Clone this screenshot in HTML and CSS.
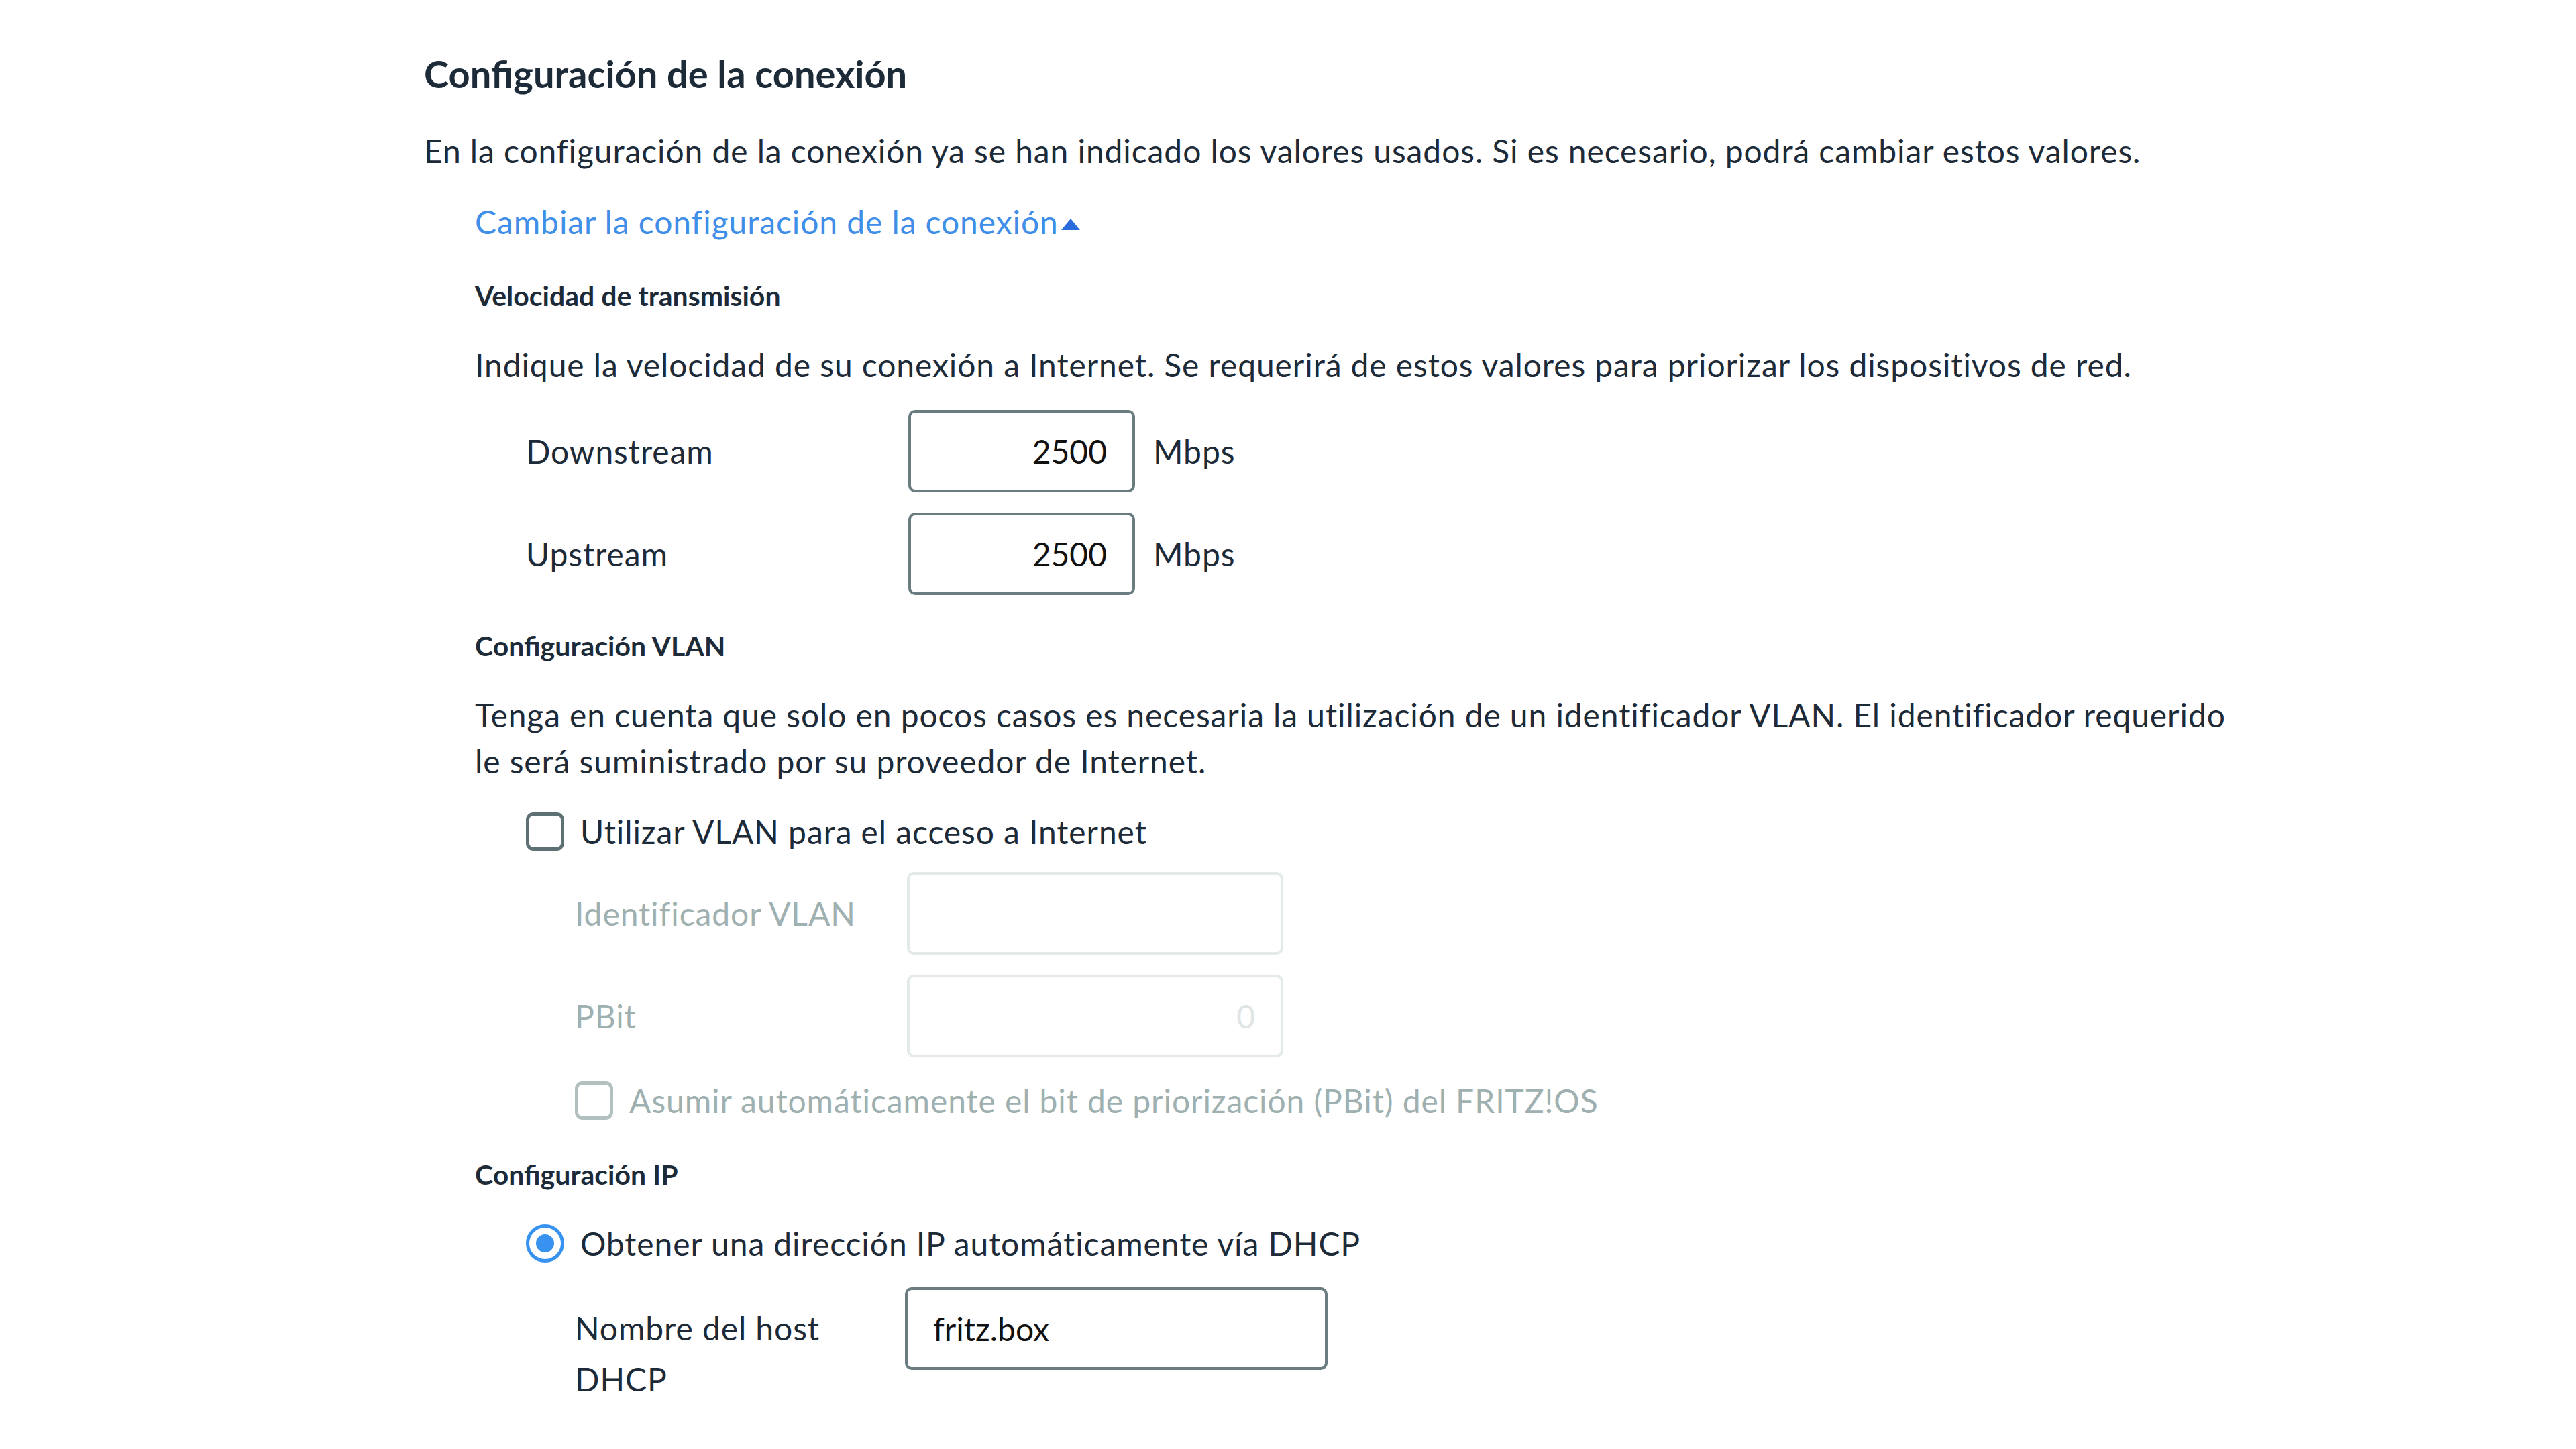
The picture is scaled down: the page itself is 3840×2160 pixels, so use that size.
FILE: index.html
```html
<!DOCTYPE html>
<html>
<head>
    <title>Configuración de la conexión</title>
    <link rel="stylesheet" href="styles.css">
</head>
<body>
    <main class="settings">
        <h2 class="page-title">Configuración de la conexión</h2>
        <p class="intro">En la configuración de la conexión ya se han indicado los valores usados. Si es necesario, podrá cambiar estos valores.</p>

        <a class="toggle-link" href="#">Cambiar la configuración de la conexión<span class="caret"></span></a>

        <section class="group">
            <h3>Velocidad de transmisión</h3>
            <p>Indique la velocidad de su conexión a Internet. Se requerirá de estos valores para priorizar los dispositivos de red.</p>
            <div class="form-row">
                <label class="row-label" for="down">Downstream</label>
                <input class="field field-speed" id="down" type="text" value="2500">
                <span class="unit">Mbps</span>
            </div>
            <div class="form-row">
                <label class="row-label" for="up">Upstream</label>
                <input class="field field-speed" id="up" type="text" value="2500">
                <span class="unit">Mbps</span>
            </div>
        </section>

        <section class="group">
            <h3>Configuración VLAN</h3>
            <p class="vlan-note">Tenga en cuenta que solo en pocos casos es necesaria la utilización de un identificador VLAN. El identificador requerido le será suministrado por su proveedor de Internet.</p>
            <label class="check-row">
                <input type="checkbox" class="check">
                <span>Utilizar VLAN para el acceso a Internet</span>
            </label>
            <div class="sub disabled">
                <div class="form-row">
                    <label class="row-label" for="vlanid">Identificador VLAN</label>
                    <input class="field field-wide" id="vlanid" type="text" value="" disabled>
                </div>
                <div class="form-row">
                    <label class="row-label" for="pbit">PBit</label>
                    <input class="field field-wide field-num" id="pbit" type="text" value="0" disabled>
                </div>
                <label class="check-row">
                    <input type="checkbox" class="check" disabled>
                    <span>Asumir automáticamente el bit de priorización (PBit) del FRITZ!OS</span>
                </label>
            </div>
        </section>

        <section class="group">
            <h3>Configuración IP</h3>
            <label class="check-row radio-row">
                <input type="radio" class="radio" name="ip" checked>
                <span>Obtener una dirección IP automáticamente vía DHCP</span>
            </label>
            <div class="sub">
                <div class="form-row host-row">
                    <label class="row-label" for="host">Nombre del host DHCP</label>
                    <input class="field field-host" id="host" type="text" value="fritz.box">
                </div>
            </div>
        </section>
    </main>
</body>
</html>
```

FILE: styles.css
```css
body {
    margin: 0;
    background: #fff;
    color: #1d2a38;
    font-family: Lato, "Open Sans", sans-serif;
    font-size: 48px;
    line-height: 69px;
    letter-spacing: 0.9px;
}

.settings {
    padding: 75px 0 0 632px;
}

.page-title {
    margin: 0 0 45px;
    font-size: 56px;
    line-height: 70px;
    font-weight: 700;
    letter-spacing: 0;
}

p {
    margin: 0;
}

.intro {
    margin-bottom: 37px;
}

.toggle-link {
    display: block;
    margin-left: 76px;
    color: #3f8fe8;
    text-decoration: none;
}

.caret {
    display: inline-block;
    margin: 0 0 6px 4px;
    border-left: 14px solid transparent;
    border-right: 14px solid transparent;
    border-bottom: 17px solid #2a6cdc;
}

.group {
    padding-left: 76px;
}

.group h3 {
    margin: 41px 0 34px;
    font-size: 41px;
    font-weight: 700;
    letter-spacing: 0;
}

.group p {
    margin-bottom: 33px;
}

.vlan-note {
    max-width: 2645px;
}

.group .vlan-note {
    margin-bottom: 36px;
}

.form-row {
    display: flex;
    align-items: center;
    padding-left: 76px;
    margin-bottom: 30px;
}

.row-label {
    width: 570px;
    flex-shrink: 0;
}

.field {
    box-sizing: border-box;
    height: 123px;
    margin: 0;
    padding: 0 38px;
    border: 4px solid #6a7c80;
    border-radius: 10px;
    background: #fff;
    color: #111;
    font: inherit;
    outline: none;
}

.field-speed {
    width: 338px;
    text-align: right;
}

.unit {
    margin-left: 27px;
}

.check-row {
    display: flex;
    align-items: center;
    gap: 24px;
    padding-left: 76px;
    margin-bottom: 26px;
}

.radio-row {
    margin-bottom: 31px;
}

.check {
    appearance: none;
    flex-shrink: 0;
    width: 57px;
    height: 57px;
    margin: 0;
    border: 5px solid #5d7175;
    border-radius: 11px;
    background: #fff;
}

.radio {
    appearance: none;
    flex-shrink: 0;
    width: 57px;
    height: 57px;
    margin: 0;
    border: 5px solid #3793ef;
    border-radius: 50%;
    background: radial-gradient(circle, #3793ef 0 13px, #fff 14px);
}

.sub {
    padding-left: 73px;
}

.sub .row-label {
    width: 495px;
}

.field-wide {
    width: 561px;
}

.field-num {
    text-align: right;
}

.disabled {
    color: #9fb0b0;
}

.disabled .field {
    border-color: #e4e9e9;
    color: #dfe5e5;
}

.disabled .check {
    border-color: #b2c0c0;
}

.host-row {
    align-items: flex-start;
}

.host-row .row-label {
    width: 432px;
    padding: 23px 60px 0 0;
    line-height: 76px;
}

.field-host {
    width: 630px;
}
```
